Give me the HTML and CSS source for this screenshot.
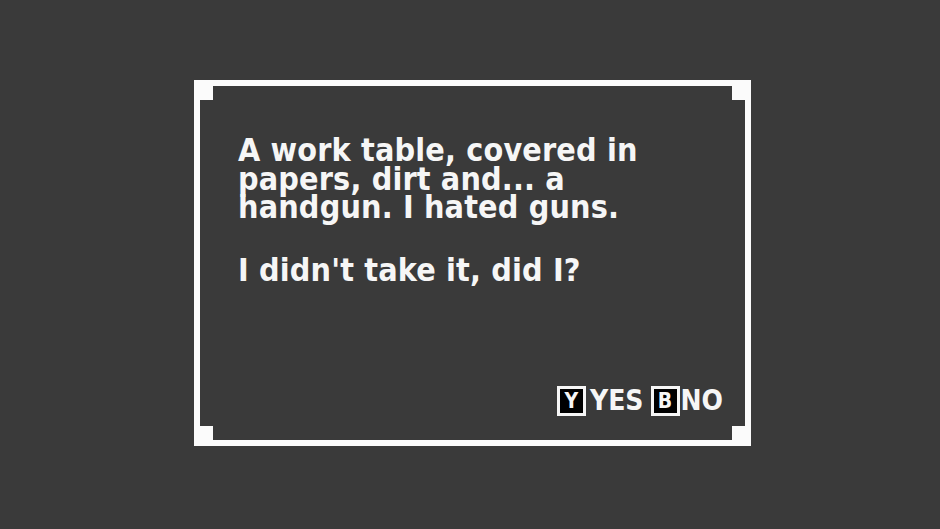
FILE: index.html
```html
<!DOCTYPE html>
<html lang="en">
<head>
<meta charset="utf-8">
<title>Work table</title>
<link rel="stylesheet" href="styles.css">
</head>
<body>
<main class="screen">
  <section class="dialog">
    <div class="dialog-text">
      <p class="para">A work table, covered in<br>papers, dirt and... a<br>handgun. I hated guns.</p>
      <p class="para">I didn't take it, did I?</p>
    </div>
    <div class="choices">
      <span class="key">Y</span><span class="label label-yes">YES</span>
      <span class="key key-b">B</span><span class="label label-no">NO</span>
    </div>
  </section>
</main>
</body>
</html>
```

FILE: styles.css
```css
html, body {
  margin: 0;
  padding: 0;
}

body {
  background: #3a3a3a;
  width: 940px;
  height: 529px;
  overflow: hidden;
  font-family: "DejaVu Sans Condensed", "DejaVu Sans", sans-serif;
  font-stretch: condensed;
  font-weight: bold;
  color: #f6f6f6;
}

.screen {
  padding: 80px 0 0 194px;
}

/* white frame with square notches in each corner */
.dialog {
  box-sizing: border-box;
  width: 557px;
  height: 366px;
  border: 6px solid #fbfbfb;
  background:
    linear-gradient(#fbfbfb, #fbfbfb) left top / 13px 14px no-repeat,
    linear-gradient(#fbfbfb, #fbfbfb) right top / 13px 14px no-repeat,
    linear-gradient(#fbfbfb, #fbfbfb) left bottom / 13px 14px no-repeat,
    linear-gradient(#fbfbfb, #fbfbfb) right bottom / 13px 14px no-repeat,
    #3a3a3a;
  display: flex;
  flex-direction: column;
  padding: 50px 22px 24px 38px;
}

.dialog-text {
  flex: 1;
}

.para {
  margin: 0;
  font-size: 32px;
  line-height: 28.5px;
  letter-spacing: 0.15px;
}

.para + .para {
  margin-top: 34.5px;
}

.choices {
  display: flex;
  align-items: center;
  justify-content: flex-end;
}

.key {
  box-sizing: border-box;
  width: 29px;
  height: 30px;
  border: 3px solid #f6f6f6;
  background: #000;
  display: flex;
  align-items: center;
  justify-content: center;
  font-size: 21px;
  line-height: 1;
}

.label {
  font-size: 28px;
  line-height: 30px;
}

.label-yes {
  margin: 0 7px 0 4px;
}

.label-no {
  margin-left: 1px;
}
```
